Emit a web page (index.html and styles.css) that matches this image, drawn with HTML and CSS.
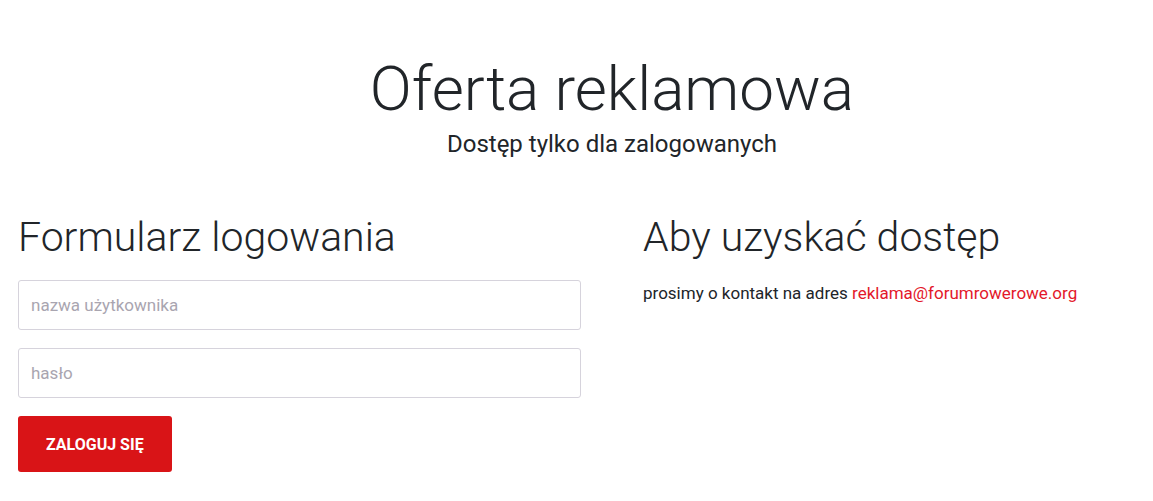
FILE: index.html
```html
<!DOCTYPE html>
<html lang="pl">
<head>
    <meta charset="UTF-8">
    <meta name="viewport" content="width=device-width, initial-scale=1.0">
    <title>Oferta reklamowa</title>
    <link rel="stylesheet" href="styles.css">
</head>
<body>
    <header class="page-head">
        <h1>Oferta reklamowa</h1>
        <p class="lead">Dostęp tylko dla zalogowanych</p>
    </header>
    <div class="columns">
        <section class="login">
            <h2>Formularz logowania</h2>
            <form action="#" method="POST">
                <input type="text" name="username" placeholder="nazwa użytkownika">
                <input type="password" name="password" placeholder="hasło">
                <button type="submit">Zaloguj się</button>
            </form>
        </section>
        <section class="access">
            <h2>Aby uzyskać dostęp</h2>
            <p>prosimy o kontakt na adres <a href="mailto:reklama@forumrowerowe.org">reklama@forumrowerowe.org</a></p>
        </section>
    </div>
</body>
</html>
```

FILE: styles.css
```css
body {
    font-family: Roboto, "Liberation Sans", sans-serif;
    color: #212529;
    margin: 0;
    padding: 0;
    background: #fff;
}
.page-head {
    text-align: center;
    padding: 52px 0 0 71px;
}
.page-head h1 {
    font-size: 62px;
    font-weight: 300;
    line-height: 1.2;
    margin: 0;
}
.lead {
    font-size: 24px;
    margin: 4px 0 0;
    line-height: 1.2;
}
.columns {
    display: flex;
    padding: 0 18px;
    margin-top: 54px;
    gap: 62px;
}
.login {
    width: 563px;
}
h2 {
    font-size: 41px;
    font-weight: 300;
    line-height: 1.2;
    margin: 0 0 18px;
}
form {
    display: flex;
    flex-direction: column;
    align-items: flex-start;
}
input {
    box-sizing: border-box;
    width: 100%;
    height: 50px;
    padding: 0 12px;
    margin-bottom: 18px;
    border: 1px solid #d6d3dc;
    border-radius: 3px;
    font-family: inherit;
    font-size: 17px;
    color: #333;
}
input::placeholder {
    color: #a9a5b0;
}
button {
    background-color: #d91417;
    color: #fff;
    border: none;
    border-radius: 3px;
    height: 56px;
    padding: 0 28px;
    font-family: inherit;
    font-size: 16px;
    font-weight: 700;
    text-transform: uppercase;
    cursor: pointer;
}
.access p {
    font-size: 17px;
    margin: 0;
    padding-top: 3px;
}
.access a {
    color: #e3172a;
    text-decoration: none;
}
```
